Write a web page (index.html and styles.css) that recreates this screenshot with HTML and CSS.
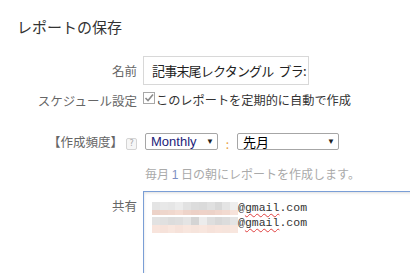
FILE: index.html
```html
<!DOCTYPE html>
<html lang="ja">
<head>
  <meta charset="UTF-8">
  <title>レポートの保存</title>
  <link rel="stylesheet" href="styles.css">
</head>
<body>

  <h1 class="title">レポートの保存</h1>

  <div class="form">
    <div class="row row-name">
      <label class="label">名前</label>
      <div class="name-box">記事末尾レクタングル ブラ:</div>
    </div>

    <div class="row row-schedule">
      <label class="label">スケジュール設定</label>
      <div class="check">
        <svg class="check-box" width="12" height="12" viewBox="0 0 12 12">
          <rect x="0.5" y="0.5" width="11" height="11" fill="#fff" stroke="#a8a8a8"/>
          <path d="M2.5 6 L5 8.5 L10 2.5" fill="none" stroke="#8a8a8a" stroke-width="1.6"/>
        </svg>
        <span>このレポートを定期的に自動で作成</span>
      </div>
    </div>

    <div class="row row-freq">
      <label class="label">【作成頻度】<span class="help">?</span></label>
      <div class="selects">
        <div class="select select-monthly"><span>Monthly</span><span class="arrow">▼</span></div>
        <span class="colon">:</span>
        <div class="select select-month"><span>先月</span><span class="arrow">▼</span></div>
      </div>
    </div>

    <div class="row row-hint">
      <span></span>
      <p class="hint">毎月 <b>1</b> 日の朝にレポートを作成します。</p>
    </div>

    <div class="row row-share">
      <label class="label">共有</label>
      <div class="share-box">
        <div class="mail">
          <div class="blur">
            <div class="blur-top">
              <i style="background:#e4e4e4"></i><i style="background:#e8e8e8"></i><i style="background:#e6e6e6"></i><i style="background:#ececec"></i><i style="background:#e2e2e2"></i><i style="background:#dcdcdc"></i><i style="background:#dadada"></i><i style="background:#e0e0e0"></i><i style="background:#d8d8d8"></i><i style="background:#e4e4e4"></i><i style="background:#eeeeee"></i>
            </div>
            <div class="blur-bottom">
              <i style="background:#ecd2c8"></i><i style="background:#eed6cc"></i><i style="background:#f0d8ce"></i><i style="background:#f4dcd2"></i><i style="background:#eed4ca"></i><i style="background:#ecd0c6"></i><i style="background:#eed2c8"></i><i style="background:#ecd2c8"></i><i style="background:#f0d6cc"></i><i style="background:#f2dad0"></i><i style="background:#f6e2da"></i>
            </div>
          </div>
          <span class="addr">@<u>gmail</u>.com</span>
        </div>
        <div class="mail">
          <div class="blur">
            <div class="blur-top">
              <i style="background:#e2e2e2"></i><i style="background:#e0e0e0"></i><i style="background:#dcdcdc"></i><i style="background:#dedede"></i><i style="background:#e4e4e4"></i><i style="background:#d4d4d4"></i><i style="background:#ececec"></i><i style="background:#dedede"></i><i style="background:#d8d8d8"></i><i style="background:#dcdcdc"></i><i style="background:#e4e4e4"></i>
            </div>
            <div class="blur-bottom">
              <i style="background:#f8e4dc"></i><i style="background:#f6e2da"></i><i style="background:#f8e6de"></i><i style="background:#f6e2da"></i><i style="background:#f8e6de"></i><i style="background:#f6e4dc"></i><i style="background:#f8e6de"></i><i style="background:#f6e2da"></i><i style="background:#f8e4dc"></i><i style="background:#f6e4dc"></i><i style="background:#f8e6de"></i>
            </div>
          </div>
          <span class="addr">@<u>gmail</u>.com</span>
        </div>
      </div>
    </div>
  </div>

</body>
</html>
```

FILE: styles.css
```css
body {
  margin: 0;
  background-color: #ffffff;
  color: #333;
  font-family: "Noto Sans CJK JP", "Noto Sans", sans-serif;
  font-size: 12.5px;
  overflow: hidden;
}
.title {
  margin: 0;
  padding: 16px 0 0 17px;
  font-size: 15px;
  font-weight: normal;
  line-height: 22px;
  color: #333;
}
.row {
  display: grid;
  grid-template-columns: 137px 1fr;
  column-gap: 6px;
  align-items: center;
}
.label {
  text-align: right;
  color: #666;
  white-space: nowrap;
}
.row-name {
  margin-top: 18px;
}
.name-box {
  width: 166px;
  height: 29px;
  box-sizing: border-box;
  border: 1px solid #d8d8d8;
  padding: 0 6px 0 8px;
  line-height: 27px;
  font-size: 13px;
  letter-spacing: -0.8px;
  word-spacing: 3px;
  color: #222;
  white-space: nowrap;
  overflow: hidden;
}
.row-schedule {
  margin-top: 4px;
  height: 22px;
}
.check {
  display: flex;
  align-items: center;
  gap: 1px;
  color: #333;
  font-size: 12.2px;
}
.check-box {
  display: block;
  margin-top: -4px;
}
.row-freq {
  margin-top: 20px;
}
.help {
  display: inline-block;
  width: 9px;
  height: 10px;
  margin-left: 3px;
  border: 1px solid #d4d4d4;
  border-radius: 2px;
  background: #f6f6f6;
  font-family: "DejaVu Sans", sans-serif;
  font-size: 8px;
  line-height: 10px;
  text-align: center;
  color: #a8a8a8;
  vertical-align: middle;
}
.selects {
  display: flex;
  align-items: center;
  padding-left: 2px;
}
.select {
  display: flex;
  justify-content: space-between;
  align-items: center;
  height: 17px;
  box-sizing: border-box;
  border: 1px solid #a6a6a6;
  border-radius: 2px;
  padding: 0 3px 0 5px;
  font-family: "Liberation Sans", "Noto Sans CJK JP", sans-serif;
  font-size: 13px;
  color: #000;
}
.select-monthly {
  width: 73px;
  color: #1c1c7a;
}
.select-month {
  width: 102px;
}
.arrow {
  font-size: 8px;
  color: #222;
}
.colon {
  width: 19px;
  text-align: center;
  color: #e8a040;
  font-size: 12px;
  padding-top: 4px;
}
.row-hint {
  margin-top: 13px;
}
.hint {
  margin: 0;
  padding-left: 2px;
  color: #aaa;
  font-size: 12px;
  line-height: 17px;
}
.hint b {
  font-weight: normal;
  color: #7d8ec2;
  font-family: "Liberation Sans", sans-serif;
}
.row-share {
  margin-top: 7px;
  align-items: start;
}
.row-share .label {
  padding-top: 5px;
}
.share-box {
  width: 290px;
  height: 100px;
  box-sizing: border-box;
  border: 1px solid #7a9ed6;
  border-right: none;
  box-shadow: inset 0 1px 3px #ddd;
  padding: 9px 8px;
}
.mail {
  display: flex;
  align-items: flex-start;
  height: 15px;
}
.blur {
  width: 86px;
  margin-top: 1px;
}
.blur-top,
.blur-bottom {
  display: flex;
}
.blur-top i,
.blur-bottom i {
  flex: 1;
  display: block;
}
.blur-top i {
  height: 8px;
}
.blur-bottom i {
  height: 5px;
}
.mail:nth-child(2) .blur-bottom i {
  height: 8px;
}
.addr {
  font-family: "Liberation Mono", "DejaVu Sans Mono", monospace;
  font-size: 11.5px;
  line-height: 13px;
  color: #333;
}
.addr u {
  text-decoration: underline wavy #e04040;
  text-decoration-thickness: 1px;
  text-underline-offset: 2px;
}
```
